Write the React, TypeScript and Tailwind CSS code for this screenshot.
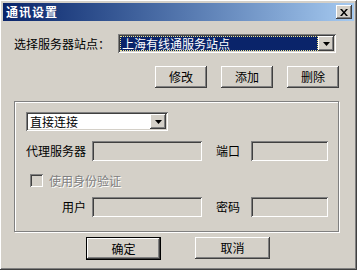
import React from 'react';

const raised = 'shadow-[inset_-1px_-1px_#404040,inset_1px_1px_#ffffff,inset_-2px_-2px_#808080,inset_2px_2px_#d4d0c8]';
const sunken = 'shadow-[inset_1px_1px_#808080,inset_-1px_-1px_#ffffff,inset_2px_2px_#404040,inset_-2px_-2px_#d4d0c8]';

const Arrow: React.FC = () => (
  <div className={`w-[16px] h-[15px] bg-[#d4d0c8] flex items-center justify-center ${raised}`}>
    <svg width="7" height="4" viewBox="0 0 7 4">
      <path d="M0 0h7L3.5 4z" fill="#000" />
    </svg>
  </div>
);

const Button: React.FC<{ label: string; w: string; isDefault?: boolean }> = ({ label, w, isDefault }) =>
  isDefault ? (
    <div className={`${w} h-[23px] border border-black`}>
      <div className={`w-full h-full flex items-center justify-center ${raised}`}>{label}</div>
    </div>
  ) : (
    <div className={`${w} h-[22px] flex items-center justify-center ${raised}`}>{label}</div>
  );

const Field: React.FC<{ w: string }> = ({ w }) => <div className={`${w} h-[20px] bg-[#d4d0c8] ${sunken}`} />;

const App: React.FC = () => {
  return (
    <div
      className={`w-[357px] h-[270px] bg-[#d4d0c8] p-[3px] flex flex-col text-[12px] leading-none text-black ${raised}`}
      style={{ fontFamily: '"Noto Sans CJK SC", "Liberation Sans", sans-serif' }}
    >
      {/* title bar */}
      <div className="h-[18px] flex items-center justify-between pl-[3px] pr-[2px] bg-gradient-to-r from-[#0a246a] to-[#a6caf0]">
        <span className="text-white font-bold text-[12px] tracking-[1px]">通讯设置</span>
        <div className={`w-[16px] h-[14px] bg-[#d4d0c8] flex items-center justify-center ${raised}`}>
          <svg width="8" height="7" viewBox="0 0 8 7">
            <path d="M0 0h2l2 2.5L6 0h2L5 3.5 8 7H6L4 4.5 2 7H0l3-3.5z" fill="#000" />
          </svg>
        </div>
      </div>

      <div className="flex-1 flex flex-col pl-[11px]">
        {/* server row */}
        <div className="mt-[13px] h-[19px] flex items-center">
          <span className="w-[104px]">选择服务器站点：</span>
          <div className={`w-[218px] h-[19px] bg-white flex items-center p-[2px] ${sunken}`}>
            <div className="flex-1 h-[15px] bg-[#0a246a] text-white flex items-center pl-[2px] outline outline-1 outline-dotted outline-[#f0e68c] -outline-offset-1">
              上海有线通服务站点
            </div>
            <Arrow />
          </div>
        </div>

        {/* edit buttons */}
        <div className="mt-[13px] ml-[141px] flex gap-[14px]">
          <Button label="修改" w="w-[52px]" />
          <Button label="添加" w="w-[52px]" />
          <Button label="删除" w="w-[52px]" />
        </div>

        {/* proxy group */}
        <div className="mt-[13px] w-[325px] h-[131px] border border-[#808080] shadow-[1px_1px_0_#ffffff,inset_1px_1px_0_#ffffff] pl-[11px] flex flex-col">
          <div className={`mt-[10px] w-[142px] h-[19px] bg-white flex items-center p-[2px] ${sunken}`}>
            <span className="flex-1 pl-[2px]">直接连接</span>
            <Arrow />
          </div>

          <div className="mt-[10px] h-[20px] flex items-center">
            <span className="w-[66px]">代理服务器</span>
            <Field w="w-[110px]" />
            <span className="ml-[14px] w-[35px]">端口</span>
            <Field w="w-[77px]" />
          </div>

          <div className="mt-[13px] h-[13px] flex items-center ml-[4px]">
            <div className={`w-[13px] h-[13px] bg-[#d4d0c8] ${sunken}`} />
            <span className="ml-[6px] text-[#808080] [text-shadow:1px_1px_0_#ffffff]">使用身份验证</span>
          </div>

          <div className="mt-[10px] h-[20px] flex items-center">
            <span className="w-[66px] pl-[36px]">用户</span>
            <Field w="w-[110px]" />
            <span className="ml-[14px] w-[35px]">密码</span>
            <Field w="w-[77px]" />
          </div>
        </div>

        {/* ok / cancel */}
        <div className="mt-[5px] ml-[72px] flex items-start gap-[34px]">
          <Button label="确定" w="w-[75px]" isDefault />
          <Button label="取消" w="w-[75px]" />
        </div>
      </div>
    </div>
  );
};

export default App;
